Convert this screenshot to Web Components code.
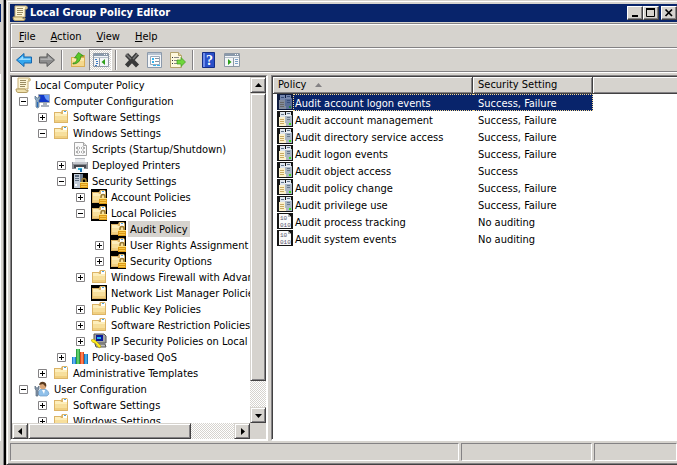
<!DOCTYPE html>
<html lang="en">
<head>
<meta charset="utf-8">
<title>Local Group Policy Editor</title>
<style>
  :root {
    --face: #d6d3ce;
    --shade: #848284;
    --dark: #424142;
    --navy: #08246b;
    --check: repeating-conic-gradient(#d6d3ce 0 25%, #fff 0 50%) 0 0 / 2px 2px;
  }
  html, body {
    height: 100%;
    margin: 0;
  }
  body {
    display: flex;
    overflow: hidden;
    background: var(--face);
    color: #000;
    font: 11px/16px Tahoma, "DejaVu Sans Condensed", "DejaVu Sans", sans-serif;
  }
</style>
</head>
<body>
<desktop-edge></desktop-edge>
<mmc-window heading="Local Group Policy Editor">
  <menu-bar slot="bars"></menu-bar>
  <tool-bar slot="bars"></tool-bar>
  <tree-pane>
    <tree-item root icon="scroll" label="Local Computer Policy">
      <tree-item open icon="computer" label="Computer Configuration">
        <tree-item closed icon="folder" label="Software Settings"></tree-item>
        <tree-item open icon="folder" label="Windows Settings">
          <tree-item icon="script" label="Scripts (Startup/Shutdown)"></tree-item>
          <tree-item closed icon="printer" label="Deployed Printers"></tree-item>
          <tree-item open icon="security" label="Security Settings">
            <tree-item closed icon="locked" label="Account Policies"></tree-item>
            <tree-item open icon="locked" label="Local Policies">
              <tree-item selected icon="locked" label="Audit Policy"></tree-item>
              <tree-item closed icon="locked" label="User Rights Assignment"></tree-item>
              <tree-item closed icon="locked" label="Security Options"></tree-item>
            </tree-item>
            <tree-item closed icon="folder" label="Windows Firewall with Advan"></tree-item>
            <tree-item icon="boxed" label="Network List Manager Policies"></tree-item>
            <tree-item closed icon="folder" label="Public Key Policies"></tree-item>
            <tree-item closed icon="folder" label="Software Restriction Policies"></tree-item>
            <tree-item closed icon="ipsec" label="IP Security Policies on Local C"></tree-item>
          </tree-item>
          <tree-item closed icon="chart" label="Policy-based QoS"></tree-item>
        </tree-item>
        <tree-item closed icon="folder" label="Administrative Templates"></tree-item>
      </tree-item>
      <tree-item open icon="user" label="User Configuration">
        <tree-item closed icon="folder" label="Software Settings"></tree-item>
        <tree-item closed icon="folder" label="Windows Settings"></tree-item>
      </tree-item>
    </tree-item>
  </tree-pane>
  <policy-list></policy-list>
  <status-bar slot="status"></status-bar>
</mmc-window>

<script>
const folderShape = `
  <path d="M1 3h7l1-2h5l1 2v11H1z" fill="#dcb467"/>
  <path d="M10 2h4v3h-4z" fill="#fff"/><path d="M11 2h2v1h-2z" fill="#4aa3df"/>
  <path d="M2 4h5l1 1h6v8H2z" fill="#f7df9c"/>
  <path d="M2 4h5l1 1h6v2H2z" fill="#fdeebb"/><path d="M2 11h12v2H2z" fill="#f0cf80"/>`;

const padlock = `
  <path d="M10 10V8q0-2.500 2-2.500T14 8v2" fill="none" stroke="#9a7a30" stroke-width="1.500"/>
  <path d="M8 9h8v6H8z" fill="#dc9a17"/><path d="M8 9h8v1H8z" fill="#ffe17a"/>
  <path d="M9 11h6v1H9zM9 13h6v1H9z" fill="#f6c64a"/>`;

const consoleShape = `
  <path d="M.5 1.500h15v13H.5z" fill="#f4f6f8" stroke="#8d98a5"/>
  <path d="M1 2h14v2H1z" fill="#8999ab"/><path d="M11 2h1v1h-1zM13 2h1v1h-1z" fill="#fff"/>
  <path d="M1 5h14v1H1z" fill="#b4bfca"/>`;

const icons = {
  scroll: `
    <path d="M3 1h11q2 0 1 3h-2v8H3z" fill="#fdf5d6" stroke="#c4ad74"/>
    <path d="M1 12h9q1 3 3 1v1q0 1.500-2 1.500H3q-2 0-2-3.500z" fill="#efe0ac" stroke="#b39d62"/>
    <path d="M5 3.500h6M5 5.500h6M5 7.500h6M5 9.500h5" stroke="#9a8c62"/>
    <path d="M13 2h2v2h-2z" fill="#d8c58a"/>`,
  computer: `
    <path d="M4.500 1.500h11v8h-11z" fill="#dfe4ea" stroke="#9aa4b2"/>
    <path d="M5 2h10v7H5z" fill="#1238c9"/><path d="M10 2h5v6q-4-1-5-6z" fill="#6c9cf5"/>
    <path d="M9 10h4v2H9zM7 12h8v2H7z" fill="#aab2bd"/>
    <path d="M1 3v3l1 1v7q1.500 2 3 0V7l1-1V3L4 5H3z" fill="#8ba9c4" stroke="#53708c" stroke-width=".7"/>
    <path d="M3 9h1v5H3z" fill="#2769b8"/>`,
  folder: folderShape,
  boxed: `<path d="M0 0h16v16H0z"/>${folderShape}`,
  locked: `<path d="M0 0h16v16H0z"/>${folderShape}${padlock}`,
  script: `
    <path d="M2.500 1.500h9l3 3v10h-12z" fill="#fafafa" stroke="#a5a5a5"/>
    <path d="M11.500 1.500v3h3" fill="#e0e0e0" stroke="#a5a5a5"/>
    <path d="M6 5.500 4.500 7 6 8.500M11 5.500 12.500 7 11 8.500M7 7h1M9 7h1M6 9.500 4.500 11 6 12.500M11 9.500l1.500 1.500-1.500 1.500M7 11h1M9 11h1" fill="none" stroke="#666"/>`,
  printer: `
    <path d="M3 1h10v5H3z" fill="#e9ebee"/><path d="M3 1h10v1H3z" fill="#b9bcc2"/>
    <path d="M0 5h16v7H0z" fill="#8b8d93"/><path d="M1 5h14v2H1z" fill="#c5c7cd"/>
    <path d="M2 8h12v3H2z" fill="#44464d"/>
    <path d="M4 10h8v5H4z" fill="#eef6fa"/><path d="M6 11h4v2H6z" fill="#2fb3d9"/><path d="M8 12h2v3H8z" fill="#1f6fae"/>`,
  security: `
    <path d="M0 0h16v16H0z"/>
    <path d="M2 1h6v14H2z" fill="#c2ccd8"/><path d="M3 2h4v2H3zM3 5h4v1H3zM3 7h4v1H3z" fill="#5b6c80"/>
    <path d="M8 1h3v14H8z" fill="#6b7c90"/><path d="M3 11h2v2H3z" fill="#fff"/>${padlock}`,
  ipsec: `
    <path d="M3 1h10l2 2v7H3z" fill="#a5a5a5" stroke="#555"/>
    <path d="M5 2h7v6H5z" fill="#0a1a9c"/><path d="M6 4h4v2H6z" fill="#1fb6e8"/>
    <path d="M4 11h10l1 3H5z" fill="#bdbdbd" stroke="#555"/>
    <path d="M0 7q3-2 5 1l5 5-1 2-2-1-3-4Q1 10 0 7z" fill="#ffec1f" stroke="#9a8a00" stroke-width=".5"/>`,
  chart: `
    <path d="M0 8h4v7H0z" fill="#1d7fd0"/><path d="M4 0h4v15H4z" fill="#2c9f40"/>
    <path d="M5 0h2v15H5z" fill="#5fce6b"/><path d="M8 3h4v12H8z" fill="#d9481f"/>
    <path d="M9 3h2v12H9z" fill="#ff7f50"/><path d="M12 5h4v10h-4z" fill="#1577bd"/>
    <path d="M13 5h2v10h-2z" fill="#46a8e4"/><path d="M1 8h2v7H1z" fill="#5fb0ee"/>`,
  user: `
    <path d="M4 13q0-5 5-5t6 5l-2 2H6z" fill="#8fc0ea" stroke="#6d9bc6" stroke-width=".7"/>
    <circle cx="9" cy="5" r="3.300" fill="#d9a679"/><path d="M5 4q1-4 5-3 3 1 2 5l-3-3z" fill="#5a3a1e"/>
    <path d="M8 9h3l-1 4z" fill="#fff"/>
    <path d="M1 5v3l1 1v6h2V9l1-1V5L3.500 7h-1z" fill="#8797aa" stroke="#55677c" stroke-width=".7"/>`,
  servers: `
    <path d="M0 0h16v16H0z" fill="#141414"/>
    <path d="M3 1h5v7H3zM9 1h5v3H9z" fill="#dfe6ee"/><path d="M8 4h7v11H8z" fill="#a9b6c4"/>
    <path d="M8 4h6v1H8z" fill="#eef3f8"/>
    <path d="M4 3h3v1H4zM10 2h3v1h-3zM10 6h3v1h-3zM10 8h3v1h-3z" fill="#66788d"/>
    <path d="M2 6h6v6h1v3H2z" fill="#fbf0cc"/><path d="M3 8h4v1H3zM3 10h4v1H3zM3 12h4v1H3z" fill="#c8aa62"/>
    <path d="M12 12h2v2h-2z" fill="#3fe01a"/>`,
  binary: `
    <path d="M0 0h16v16H0z" fill="#141414"/>
    <path d="M2 1h9l3 3v11H2z" fill="#fafafa"/><path d="M11 1v3h3z" fill="#b5b5b5"/>
    <text x="3" y="7" font-family="Liberation Mono, monospace" font-size="6" fill="#55556c">10</text>
    <text x="3" y="14" font-family="Liberation Mono, monospace" font-size="6" fill="#55556c">010</text>`,
  back: `
    <path d="M.5 8 8 1.500V5h7.500v6H8v3.500z" fill="#35a7ee" stroke="#1766ad"/>
    <path d="M2.500 8 7 4v2.500h7.500V8z" fill="#9adcff"/>`,
  forward: `
    <path d="M15.500 8 8 1.500V5H.5v6H8v3.500z" fill="#8d8d8d" stroke="#5c5c5c"/>
    <path d="M13.500 8 9 4v2.500H1.500V8z" fill="#b0b0b0"/>`,
  up: `
    <path d="M1 5h6l1-2h7v12H1z" fill="#d9ae55"/>
    <path d="M2 6h12v8H2z" fill="#f5d88c"/><path d="M2 6h12v3H2z" fill="#fbe7a6"/>
    <path d="M3 11q4 0 4-5H4.500l4-5.500L13.500 4H11q-1 8-8 8z" fill="#58c928" stroke="#2c8412" stroke-width=".7"/>`,
  tree: `${consoleShape}
    <path d="M2 7h2v1H2zM3 9h2v1H3zM3 11h2v1H3zM2 13h2v1H2z" fill="#3a78c2"/>
    <path d="M6.500 6v8" stroke="#8d98a5"/><path d="M12 7v6l-3.500-3z" fill="#2ea01a"/>`,
  actions: `${consoleShape}
    <path d="M11 7h3v1h-3zM11 9h3v1h-3zM11 11h3v1h-3z" fill="#7aa0c8"/>
    <path d="M9.500 6v8" stroke="#8d98a5"/><path d="M4 7v6l3.500-3z" fill="#2ea01a"/>`,
  remove: `
    <path d="M2.500 2.500 13.500 14M13.500 2 2.500 14" stroke="#3a3a3a" stroke-width="4.200"/>
    <path d="M2 2 7 7M13.500 2 9 7" stroke="#787878" stroke-width="1.500"/>`,
  properties: `
    <path d="M.5.5h14v15H.5z" fill="#f3f6f9" stroke="#8c9aab"/><path d="M1 1h13v2H1z" fill="#b7c3d1"/>
    <path d="M3.500 4.500h9v8h-9z" fill="#fff" stroke="#9caaba"/>
    <path d="M5 6h2v2H5zM5 9h2v2H5z" fill="#36b4ee"/><path d="M8 6h4v1H8zM8 9h4v1H8z" fill="#8494a5"/>
    <path d="M6 13h3v1H6zM10 13h3v1h-3z" fill="#36b4ee"/>`,
  export: `
    <path d="M.5.5h8l3 3v12H.5z" fill="#fdf8dc" stroke="#b3a36c"/><path d="M8.500.5v3h3" fill="#e6d8a0" stroke="#b3a36c"/>
    <path d="M2 5h1v1H2zM2 8h1v1H2zM2 11h1v1H2z" fill="#333"/>
    <path d="M4 5h5v1H4zM4 8h4v1H4zM4 11h4v1H4z" fill="#8a8a8a"/>
    <path d="M7 8h4V5.500l4.500 4.500-4.500 4.500V12H7z" fill="#6fd63c" stroke="#3d9a1c" stroke-width=".7"/>`,
  help: `
    <path d="M1.500.5h12v15h-12z" fill="#2a50c8" stroke="#142d86"/><path d="M2 1h2v14H2z" fill="#6d8cea"/>
    <text x="5" y="13" font-family="Liberation Serif, serif" font-weight="bold" font-size="14" fill="#fff">?</text>`
};

class MmcIcon extends HTMLElement {
  connectedCallback() {
    this.attachShadow({ mode: "open" }).innerHTML = `
    <style>
      :host { display: block; flex: none; width: 16px; height: 16px; }
      :host([tinted]) { background: var(--navy); }
      :host([tinted]) svg { opacity: 0.5; }
      svg { display: block; }
    </style>
    <svg width="16" height="16" viewBox="0 0 16 16" aria-hidden="true">${icons[this.getAttribute("name")]}</svg>`;
  }
}

// Strip of the window that lies behind this one
class DesktopEdge extends HTMLElement {
  connectedCallback() {
    this.attachShadow({ mode: "open" }).innerHTML = `
    <style>
      :host {
        display: flex;
        flex-direction: column;
        flex: none;
        box-sizing: border-box;
        width: 4px;
        margin-right: 2px;
        padding: 4px 0 24px;
        border-right: 1px solid var(--shade);
        box-shadow: 2px 0 #000;
      }
      div { width: 1px; }
      .title { height: 18px; background: var(--navy); }
      .bars { height: 52px; }
      .body { flex: 1; background: #fff; }
    </style>
    <div class="title"></div><div class="bars"></div><div class="body"></div>`;
  }
}

class MmcWindow extends HTMLElement {
  connectedCallback() {
    this.attachShadow({ mode: "open" }).innerHTML = `
    <style>
      :host {
        display: flex;
        flex-direction: column;
        flex: 1;
        min-width: 0;
        box-sizing: border-box;
        padding: 3px 0 1px 3px;
        border-top: 1px solid var(--face);
        border-left: 1px solid var(--face);
        border-bottom: 1px solid var(--dark);
        box-shadow: inset 1px 1px #fff, inset 0 -1px var(--shade);
      }
      header {
        display: flex;
        align-items: center;
        height: 18px;
        margin-bottom: 1px;
        padding-left: 2px;
        background: var(--navy);
        color: #fff;
      }
      h1 { flex: 1; margin: 0 0 0 2px; font-size: 11px; line-height: 18px; }
      button {
        display: grid;
        place-items: center;
        width: 16px;
        height: 14px;
        padding: 0;
        border: 1px solid;
        border-color: #fff var(--dark) var(--dark) #fff;
        box-shadow: inset -1px -1px var(--shade);
        background: var(--face);
      }
      button:last-child { margin-left: 2px; }
      main { display: flex; flex: 1; gap: 3px; min-height: 0; margin-top: 2px; }
    </style>
    <header>
      <mmc-icon name="scroll"></mmc-icon>
      <h1>${this.getAttribute("heading")}</h1>
      <button aria-label="Minimize"><svg width="10" height="10"><path d="M2 7h6v2H2z"/></svg></button>
      <button aria-label="Maximize"><svg width="10" height="10"><path d="M.5 1.500h8v7h-8z" fill="none" stroke="#000"/><path d="M0 0h9v2H0z"/></svg></button>
      <button aria-label="Close"><svg width="10" height="10"><path d="M1.500 1.500 8 8M8 1.500 1.500 8" stroke="#000" stroke-width="1.700"/></svg></button>
    </header>
    <slot name="bars"></slot>
    <main><slot></slot></main>
    <slot name="status"></slot>`;
  }
}

class MenuBar extends HTMLElement {
  connectedCallback() {
    this.attachShadow({ mode: "open" }).innerHTML = `
    <style>
      :host {
        display: flex;
        height: 22px;
        padding: 1px 0 0 1px;
        border-top: 1px solid var(--shade);
        border-left: 1px solid var(--shade);
        box-shadow: inset 1px 1px #fff;
      }
      button { padding: 0 8px 0 7px; border: 0; background: none; font: inherit; line-height: 24px; }
    </style>
    <button><u>F</u>ile</button><button><u>A</u>ction</button><button><u>V</u>iew</button><button><u>H</u>elp</button>`;
  }
}

class ToolBar extends HTMLElement {
  connectedCallback() {
    const groups = [
      [["back", "Back"], ["forward", "Forward"]],
      [["up", "Up One Level"], ["tree", "Show/Hide Console Tree"]],
      [["remove", "Delete"], ["properties", "Properties"], ["export", "Export List"]],
      [["help", "Help"], ["actions", "Show/Hide Action Pane"]]
    ];
    const button = ([icon, label]) => `
      <button aria-label="${label}" ${icon === "tree" ? 'aria-pressed="true"' : ""}><mmc-icon name="${icon}"></mmc-icon></button>`;
    this.attachShadow({ mode: "open" }).innerHTML = `
    <style>
      :host {
        display: flex;
        height: 22px;
        margin-bottom: 1px;
        padding: 1px 0 0 1px;
        border: solid var(--shade);
        border-width: 1px 0 1px 1px;
        box-shadow: inset 1px 1px #fff, 0 1px #fff;
      }
      div { display: flex; }
      div + div::before {
        content: "";
        width: 1px;
        margin: 1px 3px;
        background: var(--shade);
        border-right: 1px solid #fff;
      }
      button {
        display: grid;
        place-items: center;
        width: 23px;
        padding: 0;
        border: 1px solid transparent;
        background: none;
      }
      button[aria-pressed] {
        border-color: var(--shade) #fff #fff var(--shade);
        background: var(--check);
      }
    </style>
    ${groups.map((group) => `<div>${group.map(button).join("")}</div>`).join("")}`;
  }
}

class MmcScrollbar extends HTMLElement {
  connectedCallback() {
    const vertical = this.hasAttribute("vertical");
    const [first, last] = vertical
      ? ["M3 8h7L6.500 4z", "M3 5h7L6.500 9z"]
      : ["M8 3v7L4 6.500z", "M5 3v7l4-3.500z"];
    this.attachShadow({ mode: "open" }).innerHTML = `
    <style>
      :host { display: flex; background: var(--check); }
      :host([vertical]) { flex-direction: column; }
      button, .thumb {
        box-sizing: border-box;
        border: 1px solid;
        border-color: var(--face) var(--dark) var(--dark) var(--face);
        box-shadow: inset 1px 1px #fff, inset -1px -1px var(--shade);
        background: var(--face);
      }
      button { display: grid; place-items: center; flex: none; width: 16px; height: 16px; padding: 0; }
      .thumb { flex: var(--thumb); }
      .rest { flex: var(--rest); }
    </style>
    <button aria-label="${vertical ? "Scroll up" : "Scroll left"}"><svg width="13" height="13"><path d="${first}"/></svg></button>
    <div class="thumb"></div><div class="rest"></div>
    <button aria-label="${vertical ? "Scroll down" : "Scroll right"}"><svg width="13" height="13"><path d="${last}"/></svg></button>`;
  }
}

class TreePane extends HTMLElement {
  connectedCallback() {
    this.attachShadow({ mode: "open" }).innerHTML = `
    <style>
      :host {
        display: grid;
        grid-template: minmax(0, 1fr) 16px / minmax(0, 1fr) 16px;
        flex: none;
        width: 254px;
        padding: 1px 0 0 1px;
        border: solid;
        border-width: 1px 2px 2px 1px;
        border-color: var(--shade) #fff #fff var(--shade);
        box-shadow: inset 1px 1px var(--dark);
        background: var(--face);
      }
      .view { overflow: hidden; background: #fff; }
      .down { --thumb: 287; --rest: 26; }
      .across { --thumb: 163; --rest: 43; }
    </style>
    <div class="view" role="tree"><slot></slot></div>
    <mmc-scrollbar class="down" vertical></mmc-scrollbar>
    <mmc-scrollbar class="across"></mmc-scrollbar>`;
  }
}

class TreeItem extends HTMLElement {
  connectedCallback() {
    const open = this.hasAttribute("open");
    const sign = open ? "M2 4h5v1H2z" : "M2 4h5v1H2zM4 2h1v5H4z";
    const toggle = open || this.hasAttribute("closed")
      ? `<button aria-label="${open ? "Collapse" : "Expand"}"><svg width="9" height="9"><path d="M.5.5h8v8h-8z" fill="#fff" stroke="#848284"/><path d="${sign}"/></svg></button>`
      : "";
    this.attachShadow({ mode: "open" }).innerHTML = `
    <style>
      :host { display: block; }
      .row { display: flex; height: 16px; white-space: nowrap; }
      .toggle { flex: none; width: 15px; }
      button { display: block; padding: 4px 0 3px; border: 0; background: none; }
      svg { display: block; }
      .label { height: 16px; margin-left: 2px; padding: 0 2px; line-height: 18px; }
      :host([selected]) .label { background: var(--face); }
      .children { padding-left: 19px; }
      :host([root]) .row { padding-left: 3px; }
      :host([root]) .toggle { display: none; }
      :host([root]) .children { padding-left: 7px; }
    </style>
    <div class="row" role="treeitem">
      <span class="toggle">${toggle}</span>
      <mmc-icon name="${this.getAttribute("icon")}"></mmc-icon>
      <span class="label">${this.getAttribute("label")}</span>
    </div>
    <div class="children" role="group"><slot></slot></div>`;
  }
}

class PolicyList extends HTMLElement {
  connectedCallback() {
    const policies = [
      ["Audit account logon events", "Success, Failure"],
      ["Audit account management", "Success, Failure"],
      ["Audit directory service access", "Success, Failure"],
      ["Audit logon events", "Success, Failure"],
      ["Audit object access", "Success"],
      ["Audit policy change", "Success, Failure"],
      ["Audit privilege use", "Success, Failure"],
      ["Audit process tracking", "No auditing"],
      ["Audit system events", "No auditing"]
    ];
    const row = ([name, setting], i) => `
      <tr class="${i === 0 ? "selected" : ""}">
        <td><div class="name"><mmc-icon ${i === 0 ? "tinted" : ""} name="${setting === "No auditing" ? "binary" : "servers"}"></mmc-icon><span>${name}</span></div></td>
        <td><div class="setting">${setting}</div></td>
        <td></td>
      </tr>`;
    this.attachShadow({ mode: "open" }).innerHTML = `
    <style>
      :host {
        display: block;
        flex: 1;
        min-width: 0;
        padding: 1px 0 0 1px;
        border: solid;
        border-width: 1px 0 2px 1px;
        border-color: var(--shade) #fff #fff var(--shade);
        box-shadow: inset 1px 1px var(--dark);
        background: #fff;
      }
      table { width: 100%; table-layout: fixed; border-spacing: 0; }
      th, td { padding: 0; text-align: left; font-weight: normal; white-space: nowrap; }
      th {
        box-sizing: border-box;
        height: 17px;
        padding-left: 5px;
        background: var(--face);
        border-right: 1px solid var(--dark);
        border-bottom: 1px solid var(--dark);
        box-shadow: inset 1px 1px #fff, inset -1px -1px var(--shade);
      }
      th:last-child {
        border-right: 0;
        box-shadow: inset 1px 1px #fff, inset 0 -1px var(--shade);
      }
      th svg { margin-left: 9px; vertical-align: 1px; }
      .policy { width: 200px; }
      .security { width: 120px; }
      .name { display: flex; padding-left: 4px; }
      .name span, .setting {
        box-sizing: border-box;
        height: 17px;
        border: 1px dotted transparent;
        line-height: 17px;
      }
      .name span { flex: 1; padding-left: 1px; border-right: 0; }
      .setting { padding-left: 5px; border-left: 0; }
      .selected span, .selected .setting {
        background: var(--navy);
        border-color: #f7db94;
        color: #fff;
      }
    </style>
    <table>
      <colgroup><col class="policy"><col class="security"><col></colgroup>
      <thead><tr>
        <th>Policy<svg width="7" height="4"><path d="M0 4h7L3.500 0z" fill="#848284"/></svg></th>
        <th>Security Setting</th>
        <th></th>
      </tr></thead>
      <tbody>${policies.map(row).join("")}</tbody>
    </table>`;
  }
}

class StatusBar extends HTMLElement {
  connectedCallback() {
    this.attachShadow({ mode: "open" }).innerHTML = `
    <style>
      :host { display: flex; flex: none; gap: 2px; height: 18px; margin: 2px 0; }
      div {
        box-sizing: border-box;
        flex: 1;
        border: 1px solid;
        border-color: var(--shade) #fff #fff var(--shade);
      }
      div + div { flex: none; width: 131px; }
      div:last-child { width: 83px; }
    </style>
    <div></div><div></div><div></div>`;
  }
}

customElements.define("mmc-icon", MmcIcon);
customElements.define("desktop-edge", DesktopEdge);
customElements.define("mmc-window", MmcWindow);
customElements.define("menu-bar", MenuBar);
customElements.define("tool-bar", ToolBar);
customElements.define("mmc-scrollbar", MmcScrollbar);
customElements.define("tree-pane", TreePane);
customElements.define("tree-item", TreeItem);
customElements.define("policy-list", PolicyList);
customElements.define("status-bar", StatusBar);
</script>
</body>
</html>
